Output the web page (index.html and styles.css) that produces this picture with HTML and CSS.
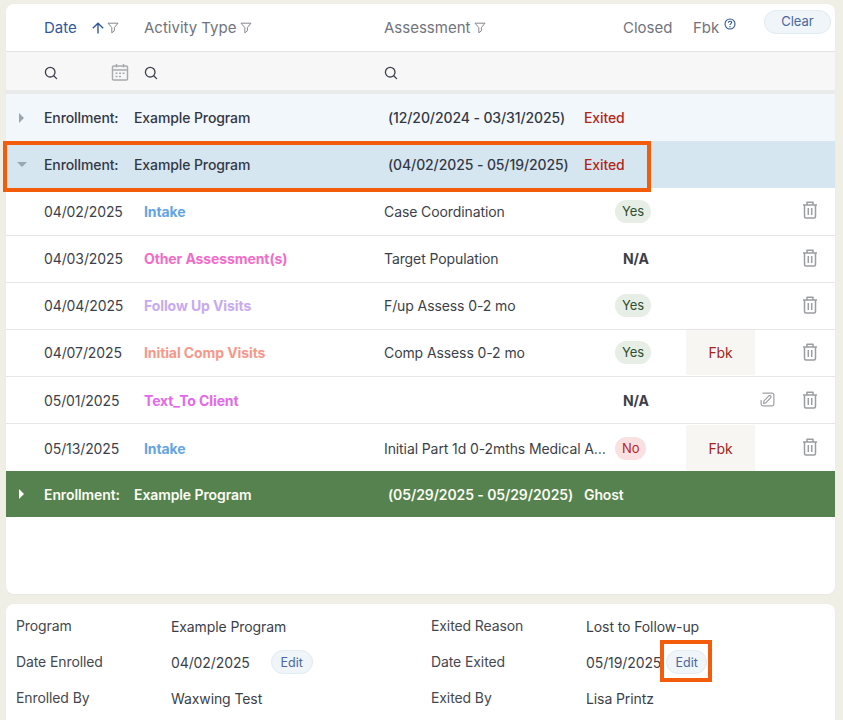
FILE: index.html
```html
<!DOCTYPE html>
<html lang="en">
<head>
<meta charset="utf-8">
<title>Enrollments</title>
<link rel="stylesheet" href="styles.css">
</head>
<body>
<svg class="defs" width="0" height="0" aria-hidden="true">
  <symbol id="i-filter" viewBox="0 0 12 12"><path d="M1 1.200h10L7.400 5.600v3.200L4.800 10.800V5.600z" fill="none" stroke="currentColor" stroke-width="1" stroke-linejoin="round"/></symbol>
  <symbol id="i-search" viewBox="0 0 14 14"><circle cx="6.200" cy="6.200" r="4.800" fill="none" stroke="currentColor" stroke-width="1.300"/><path d="M9.700 9.700l2.900 2.900" stroke="currentColor" stroke-width="1.300" stroke-linecap="round"/></symbol>
  <symbol id="i-trash" viewBox="0 0 16 18"><path d="M1 4h14M5 3.800V1.200h6v2.600M2.500 4v11.500c0 .9.600 1.500 1.500 1.500h8c.9 0 1.500-.6 1.500-1.500V4M6.300 7v7M9.700 7v7" fill="none" stroke="currentColor" stroke-width="1.500" stroke-linejoin="round"/></symbol>
  <symbol id="i-note" viewBox="0 0 16 16"><path d="M1.200 9v3.800c0 1.100.9 2 2 2h9.600c1.100 0 2-.9 2-2V3.200c0-1.100-.9-2-2-2H3.200" fill="none" stroke="currentColor" stroke-width="1.300" stroke-linecap="round"/><path d="M3.800 12.300l.5-2.800 5.200-5.300c.5-.5 1.400-.5 1.900 0s.5 1.400 0 1.900l-5.200 5.500z" fill="none" stroke="currentColor" stroke-width="1.300" stroke-linejoin="round"/></symbol>
</svg>

<main class="page">
  <section class="card table-card">
    <div class="row head">
      <div class="cell head-date"><span class="sorted">Date</span>
        <span class="head-icons">
          <svg class="ic-arrow" viewBox="0 0 12 12"><path d="M6 11.500V1.200M.8 6.200L6 1.200l5.200 5" fill="none" stroke="currentColor" stroke-width="1.400"/></svg>
          <svg class="ic-filter"><use href="#i-filter"/></svg>
        </span>
      </div>
      <div class="cell head-label">Activity Type <svg class="ic-filter"><use href="#i-filter"/></svg></div>
      <div class="cell head-label">Assessment <svg class="ic-filter"><use href="#i-filter"/></svg></div>
      <div class="cell head-label head-closed">Closed</div>
      <div class="cell head-label head-fbk">Fbk
        <svg class="ic-help" viewBox="0 0 12 12"><circle cx="6" cy="6" r="5" fill="none" stroke="currentColor" stroke-width="1.100"/><path d="M4.400 4.800c0-2.100 3.200-2.100 3.200-.2 0 1.100-1.600 1-1.600 2.300" fill="none" stroke="currentColor" stroke-width="1.100"/><circle cx="6" cy="8.700" r=".7" fill="currentColor"/></svg>
      </div>
      <button class="clear" type="button">Clear</button>
    </div>

    <div class="row search">
      <div class="cell search-date">
        <svg class="ic-search"><use href="#i-search"/></svg>
        <svg class="ic-cal" viewBox="0 0 18 18"><path d="M2.500 3h13c.600 0 1 .4 1 1v12c0 .6-.4 1-1 1h-13c-.6 0-1-.4-1-1V4c0-.6.4-1 1-1zM1.500 7h15M5.500 1v3.500M12.500 1v3.500" fill="none" stroke="currentColor" stroke-width="1.500"/><path d="M4.500 9.500h2v1.500h-2zM8 9.500h2v1.500H8zM11.500 9.500h2v1.500h-2zM4.500 12.800h2v1.500h-2zM8 12.800h2v1.500H8z" fill="currentColor"/></svg>
      </div>
      <div class="cell"><svg class="ic-search"><use href="#i-search"/></svg></div>
      <div class="cell"><svg class="ic-search"><use href="#i-search"/></svg></div>
    </div>

    <div class="group group-light">
      <span class="caret caret-right"></span><span class="g-label">Enrollment:</span><span class="g-prog">Example Program</span><span class="g-dates">(12/20/2024 - 03/31/2025)</span><span class="g-status exited">Exited</span>
    </div>
    <div class="group group-open">
      <span class="caret caret-down"></span><span class="g-label">Enrollment:</span><span class="g-prog">Example Program</span><span class="g-dates">(04/02/2025 - 05/19/2025)</span><span class="g-status exited">Exited</span>
      <div class="mark mark-group"></div>
    </div>

    <div class="row item item-first">
      <div class="cell">04/02/2025</div>
      <div class="cell type blue">Intake</div>
      <div class="cell">Case Coordination</div>
      <div class="cell"><span class="pill yes">Yes</span></div>
      <div class="cell"></div>
      <div class="cell"></div>
      <div class="cell act"><svg class="ic-trash"><use href="#i-trash"/></svg></div>
    </div>
    <div class="row item">
      <div class="cell">04/03/2025</div>
      <div class="cell type pink">Other Assessment(s)</div>
      <div class="cell">Target Population</div>
      <div class="cell"><span class="na">N/A</span></div>
      <div class="cell"></div>
      <div class="cell"></div>
      <div class="cell act"><svg class="ic-trash"><use href="#i-trash"/></svg></div>
    </div>
    <div class="row item">
      <div class="cell">04/04/2025</div>
      <div class="cell type lilac">Follow Up Visits</div>
      <div class="cell">F/up Assess 0-2 mo</div>
      <div class="cell"><span class="pill yes">Yes</span></div>
      <div class="cell"></div>
      <div class="cell"></div>
      <div class="cell act"><svg class="ic-trash"><use href="#i-trash"/></svg></div>
    </div>
    <div class="row item">
      <div class="cell">04/07/2025</div>
      <div class="cell type salmon">Initial Comp Visits</div>
      <div class="cell">Comp Assess 0-2 mo</div>
      <div class="cell"><span class="pill yes">Yes</span></div>
      <div class="cell fbk">Fbk</div>
      <div class="cell"></div>
      <div class="cell act"><svg class="ic-trash"><use href="#i-trash"/></svg></div>
    </div>
    <div class="row item item-low">
      <div class="cell">05/01/2025</div>
      <div class="cell type magenta">Text_To Client</div>
      <div class="cell"></div>
      <div class="cell"><span class="na">N/A</span></div>
      <div class="cell"></div>
      <div class="cell note"><svg class="ic-note"><use href="#i-note"/></svg></div>
      <div class="cell act"><svg class="ic-trash"><use href="#i-trash"/></svg></div>
    </div>
    <div class="row item item-low item-last">
      <div class="cell">05/13/2025</div>
      <div class="cell type blue">Intake</div>
      <div class="cell"><span class="clip">Initial Part 1d 0-2mths Medical Assessment</span></div>
      <div class="cell"><span class="pill no">No</span></div>
      <div class="cell fbk">Fbk</div>
      <div class="cell"></div>
      <div class="cell act"><svg class="ic-trash"><use href="#i-trash"/></svg></div>
    </div>

    <div class="group group-green">
      <span class="caret caret-right"></span><span class="g-label">Enrollment:</span><span class="g-prog">Example Program</span><span class="g-dates">(05/29/2025 - 05/29/2025)</span><span class="g-status">Ghost</span>
    </div>
  </section>

  <section class="card details">
    <div class="d-label">Program</div><div class="d-value">Example Program</div>
    <div class="d-label">Exited Reason</div><div class="d-value">Lost to Follow-up</div>
    <div class="d-label">Date Enrolled</div><div class="d-value"><span>04/02/2025</span><button class="edit edit-left" type="button">Edit</button></div>
    <div class="d-label">Date Exited</div><div class="d-value"><span>05/19/2025</span><span class="edit-wrap"><button class="edit edit-right" type="button">Edit</button><span class="mark mark-edit"></span></span></div>
    <div class="d-label">Enrolled By</div><div class="d-value">Waxwing Test</div>
    <div class="d-label">Exited By</div><div class="d-value">Lisa Printz</div>
  </section>
</main>
</body>
</html>
```

FILE: styles.css
```css
* { box-sizing: border-box; }
html, body { margin: 0; height: 720px; overflow: hidden; }
body {
  background: #efefe5;
  font-family: Inter, "Liberation Sans", sans-serif;
  font-size: 14px;
  letter-spacing: -0.1px;
  color: #3c3f4a;
}
.defs { position: absolute; }
.page { display: flex; flex-direction: column; gap: 10px; padding: 4px 8px 0 6px; }
.card { background: #fff; border-radius: 8px; box-shadow: 0 1px 2px rgba(0,0,0,.03); }
.table-card { height: 590px; }

.row {
  display: grid;
  grid-template-columns: 100px 240px 231px 71px 69px 35px 44px;
  padding-left: 38px;
}
.cell { display: flex; align-items: center; min-width: 0; }

.head { position: relative; height: 48px; border-bottom: 1px solid #e4e4e4; font-size: 15px; letter-spacing: 0; color: #71747d; }
.head-label { gap: 4px; }
.head-date { justify-content: flex-start; }
.sorted { color: #31589f; width: 48px; }
.head-icons { display: flex; align-items: center; gap: 3px; }
.ic-arrow { width: 12px; height: 12px; color: #31589f; margin-top: 1px; }
.ic-filter { width: 12px; height: 12px; color: #85878e; }
.ic-help { width: 12px; height: 12px; color: #31589f; margin: -7px 0 0 2px; }
.head-closed { margin-left: 8px; }
.head-fbk { gap: 3px; margin-left: 7px; }
.clear {
  position: absolute; top: 6px; left: 758px;
  width: 67px; height: 24px; padding: 0 0 2px;
  border: 1px solid #e2ebf1; border-radius: 12px;
  background: #eff5f9; color: #4a689f;
  font: 13px Inter, "Liberation Sans", sans-serif;
}

.search { height: 38px; padding-top: 4px; background: #f7f7f7; color: #3c3f4a; }
.search-date { justify-content: space-between; padding-right: 15px; }
.ic-search { width: 14px; height: 14px; }
.ic-cal { width: 18px; height: 18px; color: #a9abaf; margin-top: -3px; }

.group { position: relative; display: flex; align-items: center; height: 47px; font-weight: 500; color: #343845; }
.group-light { background: #f1f7fa; border-top: 4px solid #e9eaea; height: 51px; }
.group-open { background: #d5e6f0; }
.group-green { background: #55824f; color: #fbfbf2; font-weight: 600; height: 46px; }
.caret { width: 38px; flex: none; position: relative; height: 10px; }
.caret::before { content: ""; position: absolute; border-style: solid; border-color: transparent; }
.caret-right::before { left: 13px; top: 0; border-width: 5px 0 5px 5px; border-left-color: #9aa7af; }
.group-green .caret-right::before { border-left-color: #fff; }
.caret-down::before { left: 11px; top: 2px; border-width: 5px 5px 0; border-top-color: #9aa7af; }
.g-label { width: 90px; flex: none; }
.g-prog { width: 254px; flex: none; }
.g-dates { width: 196px; flex: none; }
.exited { color: #b3261e; }

.mark { position: absolute; border: 4px solid #f25c0a; pointer-events: none; }
.mark-group { left: -3px; top: 0; width: 648px; height: 51px; }
.mark-edit { left: -6px; top: -10px; width: 52px; height: 42px; }

.item { height: 47px; border-bottom: 1px solid #e6e6e6; padding-bottom: 1px; }
.item-first { height: 48px; }
.item-low { padding-top: 1px; padding-bottom: 0; }
.item-last { border-bottom: 0; }
.type { font-weight: 700; }
.blue { color: #63a5e4; }
.pink { color: #f26bc8; }
.lilac { color: #c8aaf0; }
.salmon { color: #f6988a; }
.magenta { color: #e468ea; }
.clip { overflow: hidden; white-space: nowrap; text-overflow: ellipsis; margin-right: 9px; }
.pill { display: inline-block; height: 23px; line-height: 23px; padding: 0 7px; border-radius: 12px; font-size: 13px; }
.yes { background: #e6eee6; color: #2f4f33; }
.no { background: #fbe0e2; color: #b3261e; }
.na { font-weight: 700; margin-left: 8px; color: #3c3f4a; }
.fbk { background: #f7f6f2; color: #a3221a; justify-content: center; }
.note { justify-content: flex-start; padding-left: 5px; }
.ic-note { width: 15px; height: 15px; color: #9fa1a6; margin-top: -3px; }
.act { justify-content: flex-start; padding-left: 12px; }
.ic-trash { width: 16px; height: 18px; color: #9b9da2; margin-top: -2px; }

.details {
  display: grid;
  grid-template-columns: 155px 260px 155px 1fr;
  grid-auto-rows: 36px;
  padding: 4px 10px 0;
  height: 130px;
  align-items: center;
}
.d-label { color: #45484f; margin-top: -2px; }
.d-value { display: flex; align-items: center; color: #3c3f4a; }
.edit {
  width: 42px; height: 24px; padding: 0;
  border: 1px solid #e2ebf1; border-radius: 12px;
  background: #eff5f9; color: #4a689f;
  font: 12.500px Inter, "Liberation Sans", sans-serif;
}
.edit-left { margin-left: 21px; }
.edit-right { width: 41px; }
.edit-wrap { position: relative; display: inline-flex; margin-left: 5px; }
```
